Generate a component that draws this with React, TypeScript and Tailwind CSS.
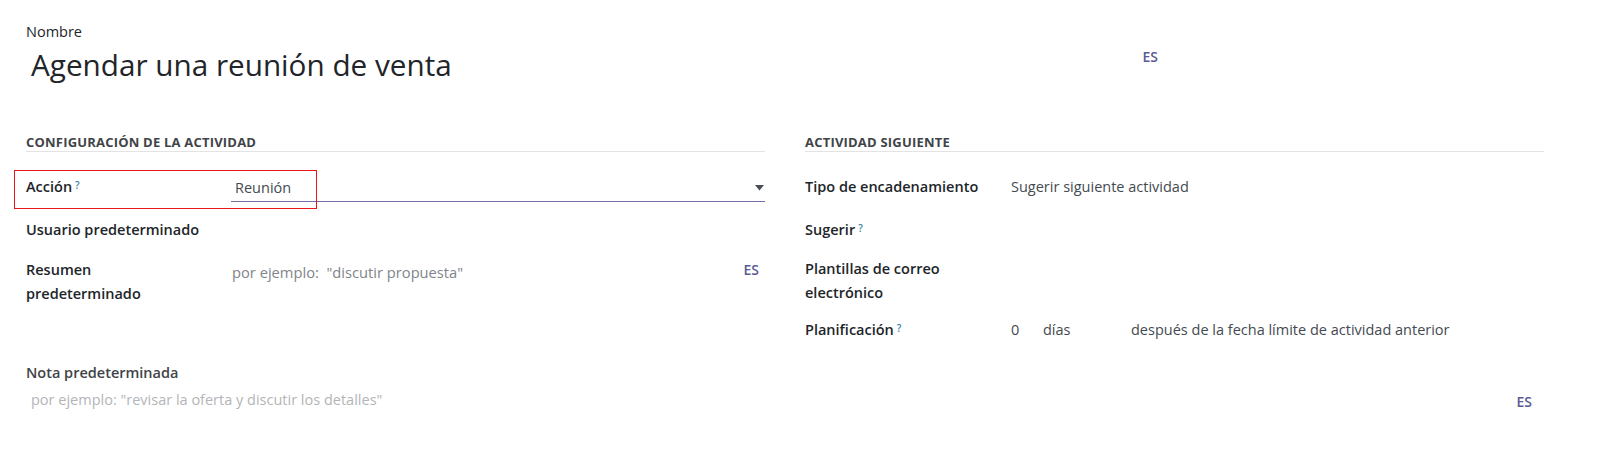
import React from "react";

function Help() {
  return <sup className="ml-[3px] text-[10px] font-semibold text-[#3b7fa8] relative -top-[3px]">?</sup>;
}

function Label({ children, help }: { children: React.ReactNode; help?: boolean }) {
  return (
    <div className="w-[205px] shrink-0 text-[14.5px] leading-6 font-semibold text-[#212529]">
      {children}
      {help && <Help />}
    </div>
  );
}

function Lang({ className = "" }: { className?: string }) {
  return <span className={`text-[14px] font-semibold text-[#5c5a94] ${className}`}>ES</span>;
}

export default function App() {
  return (
    <div className="relative w-[1618px] h-[468px] bg-white pl-[26px] font-['Open_Sans',sans-serif] text-[#212529]">
      {/* name */}
      <div className="pt-[22px] text-[14.5px] leading-5 font-medium text-[#212529]">Nombre</div>
      <div className="flex w-[1132px] items-start mt-[5px]">
        <div className="flex-1 pl-[5px] text-[29.7px] leading-9 text-[#212529]">Agendar una reunión de venta</div>
        <Lang className="mt-[-1px]" />
      </div>

      <div className="mt-[50px] flex gap-10 w-[1518px]">
        {/* left column */}
        <div className="w-[739px]">
          <div className="border-b border-[#e3e3e3] text-[13px] leading-[18px] font-bold text-[#3f4448] tracking-[0.2px]">
            CONFIGURACIÓN DE LA ACTIVIDAD
          </div>
          <div className="flex mt-[23px]">
            <Label help>Acción</Label>
            <div className="flex-1 h-[27px] border-b border-[#7a6aa8] flex items-start justify-between">
              <span className="pl-[4px] pt-[1px] text-[14.5px] leading-6 text-[#444a50]">Reunión</span>
              <svg width="9" height="6" viewBox="0 0 9 6" className="mt-[10px] mr-[1px]">
                <path d="M0 0 L9 0 L4.5 5.5 Z" fill="#4a4f55" />
              </svg>
            </div>
          </div>
          <div className="flex mt-[16px]">
            <Label>Usuario predeterminado</Label>
          </div>
          <div className="flex mt-[16px]">
            <Label>
              Resumen
              <br />
              predeterminado
            </Label>
            <div className="flex-1 flex justify-between pt-[2px]">
              <span className="pl-[1px] text-[14.7px] leading-6 text-[#80858b]">por ejemplo:&nbsp; "discutir propuesta"</span>
              <Lang className="mr-[6px] leading-6 -mt-[2px]" />
            </div>
          </div>
        </div>

        {/* right column */}
        <div className="w-[739px]">
          <div className="border-b border-[#e3e3e3] text-[13px] leading-[18px] font-bold text-[#3f4448] tracking-[0.2px]">
            ACTIVIDAD SIGUIENTE
          </div>
          <div className="flex mt-[23px]">
            <Label>Tipo de encadenamiento</Label>
            <div className="flex-1 pl-[1px] text-[14.5px] leading-6 text-[#444a50]">Sugerir siguiente actividad</div>
          </div>
          <div className="flex mt-[19px]">
            <Label help>Sugerir</Label>
          </div>
          <div className="flex mt-[15px]">
            <Label>
              Plantillas de correo
              <br />
              electrónico
            </Label>
          </div>
          <div className="flex mt-[13px]">
            <Label help>Planificación</Label>
            <div className="flex-1 flex pl-[1px] text-[14.5px] leading-6 text-[#444a50]">
              <span className="w-[32px]">0</span>
              <span className="w-[88px]">días</span>
              <span>después de la fecha límite de actividad anterior</span>
            </div>
          </div>
        </div>
      </div>

      {/* note */}
      <div className="mt-[19px] w-[1518px]">
        <div className="text-[14.5px] leading-6 font-semibold text-[#3f4448]">Nota predeterminada</div>
        <div className="flex justify-between mt-[3px]">
          <span className="pl-[5px] text-[14.5px] leading-6 text-[#b3b5b8]">por ejemplo: "revisar la oferta y discutir los detalles"</span>
          <Lang className="mr-[12px] leading-6 mt-[2px]" />
        </div>
      </div>

      {/* annotation box */}
      <div className="absolute left-[14px] top-[170px] w-[303px] h-[39px] border-[1.5px] border-[#e8161b] pointer-events-none" />
    </div>
  );
}
